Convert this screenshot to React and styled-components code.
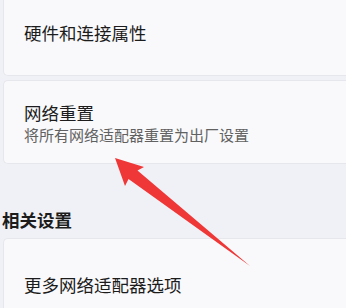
import React from "react";
import styled, { createGlobalStyle } from "styled-components";

const Global = createGlobalStyle`
  html, body {
    margin: 0;
    padding: 0;
    background: #eff1f6;
    overflow: hidden;
  }
  body {
    font-family: "Noto Sans CJK SC", "Noto Sans", sans-serif;
    color: #1b1b1b;
  }
`

const Page = styled.div`
  position: relative;
  width: 346px;
  height: 308px;
  overflow: hidden;
  padding-left: 3px;
  box-sizing: border-box;
`

const Card = styled.div`
  background: #f9f9fb;
  border: 1px solid #e6e7ec;
  border-right: none;
  border-radius: 5px 0 0 5px;
  padding: ${p => p.$pt || 0}px 0 0 20px;
  height: ${p => p.$h}px;
  margin-top: ${p => p.$mt || 0}px;
  display: flex;
  flex-direction: column;
  justify-content: ${p => (p.$top ? "flex-start" : "center")};
  box-sizing: border-box;
`

const Title = styled.div`
  font-size: 17.5px;
  line-height: 22px;
  color: #1c1c1c;
`

const Sub = styled.div`
  font-size: 15px;
  line-height: 22px;
  color: #616161;
`

const Section = styled.div`
  font-size: 17.5px;
  font-weight: 600;
  line-height: 24px;
  color: #1c1c1c;
  margin: 44px 0 0 -1px;
`

const Arrow = styled.svg`
  position: absolute;
  left: 0;
  top: 0;
  pointer-events: none;
`

export default function App() {
  return (
    <Page>
      <Global />
      <Card $h={90} $mt={-14} $pt={4}>
        <Title>硬件和连接属性</Title>
      </Card>
      <Card $h={84} $mt={4} $pt={4}>
        <Title>网络重置</Title>
        <Sub>将所有网络适配器重置为出厂设置</Sub>
      </Card>
      <Section>相关设置</Section>
      <Card $h={100} $mt={6} $pt={35} $top>
        <Title>更多网络适配器选项</Title>
      </Card>
      <Arrow width="346" height="308" viewBox="0 0 346 308">
        <polygon
          points="115,158 144,167 137.5,170.5 250,266 128.5,179 125,186"
          fill="#f03737"
        />
      </Arrow>
    </Page>
  );
}
